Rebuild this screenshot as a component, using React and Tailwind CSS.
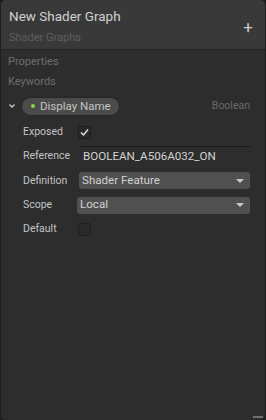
export default function App() {
  const font = { fontFamily: "Roboto, 'Noto Sans', sans-serif" };
  return (
    <div className="w-[266px] h-[420px] bg-[#1e1e1e] overflow-hidden" style={font}>
      <div className="relative w-[264px] h-[420px] ml-[1px] bg-[#2d2d2d] rounded-[5px] overflow-hidden flex flex-col">
        <div className="h-[50px] bg-[#393939] border-b border-[#232323] flex items-start justify-between pl-[8px] pr-[12px]">
          <div className="flex flex-col">
            <div className="text-[13.5px] leading-[16px] text-[#d2d2d2] mt-[8px]">New Shader Graph</div>
            <div className="text-[11px] leading-[14px] text-[#5e5e5e] mt-[7px]">Shader Graphs</div>
          </div>
          <div className="text-[#c8c8c8] text-[17px] leading-[16px] mt-[19px]">+</div>
        </div>
        <div className="pl-[7px] pt-[2px] text-[11px] leading-[20px] text-[#6e6e6e]">
          <div>Properties</div>
          <div>Keywords</div>
        </div>
        <div className="flex items-center h-[22px] mt-[3px] pl-[6px] pr-[15px]">
          <svg width="10" height="10" viewBox="0 0 10 10" className="mr-[4px]">
            <path d="M2.5 3.5 L5 6 L7.5 3.5" fill="none" stroke="#c8c8c8" strokeWidth="1.4" />
          </svg>
          <div className="flex items-center h-[19px] pl-[9px] pr-[8px] rounded-full bg-[#4b4b4b] border border-[#262626]">
            <span className="w-[4px] h-[4px] rounded-full bg-[#8bd24a] mr-[5px]"></span>
            <span className="text-[11.5px] text-[#c4c4c4] leading-[14px]">Display Name</span>
          </div>
          <div className="ml-auto text-[10.5px] text-[#6a6a6a]">Boolean</div>
        </div>
        <div className="pl-[22px] pr-[15px] text-[10.5px] text-[#c4c4c4]">
          <div className="flex items-center h-[24px] mt-[3px]">
            <span className="w-[55px]">Exposed</span>
            <span className="w-[13px] h-[13px] rounded-[2px] bg-[#2a2a2a] border border-[#1e1e1e] flex items-center justify-center">
              <svg width="9" height="9" viewBox="0 0 9 9"><path d="M1 4.5 L3.5 7 L8 1.5" fill="none" stroke="#e6e6e6" strokeWidth="1.4" /></svg>
            </span>
          </div>
          <div className="flex items-center h-[24px]">
            <span className="w-[57px]">Reference</span>
            <div className="flex-1 h-[20px] border-t border-[#1a1a1a] flex items-center pl-[3px] text-[11.6px] text-[#d2d2d2]">BOOLEAN_A506A032_ON</div>
          </div>
          <div className="flex items-center h-[25px]">
            <span className="w-[56px]">Definition</span>
            <div className="flex-1 h-[17px] bg-[#505050] rounded-[3px] flex items-center pl-[3px] pr-[6px] text-[11.6px] text-[#d2d2d2]">
              <span>Shader Feature</span>
              <span className="ml-auto w-0 h-0 border-l-[4px] border-r-[4px] border-t-[4px] border-l-transparent border-r-transparent border-t-[#c8c8c8]"></span>
            </div>
          </div>
          <div className="flex items-center h-[24px]">
            <span className="w-[54px]">Scope</span>
            <div className="flex-1 h-[17px] bg-[#505050] rounded-[3px] flex items-center pl-[3px] pr-[6px] text-[11.6px] text-[#d2d2d2]">
              <span>Local</span>
              <span className="ml-auto w-0 h-0 border-l-[4px] border-r-[4px] border-t-[4px] border-l-transparent border-r-transparent border-t-[#c8c8c8]"></span>
            </div>
          </div>
          <div className="flex items-center h-[24px]">
            <span className="w-[55px]">Default</span>
            <span className="w-[13px] h-[13px] rounded-[2px] bg-[#2a2a2a] border border-[#1e1e1e]"></span>
          </div>
        </div>
        <div className="absolute right-[2px] bottom-[2px] w-[10px] h-[2px] bg-[#6e6e6e]"></div>
      </div>
    </div>
  );
}
